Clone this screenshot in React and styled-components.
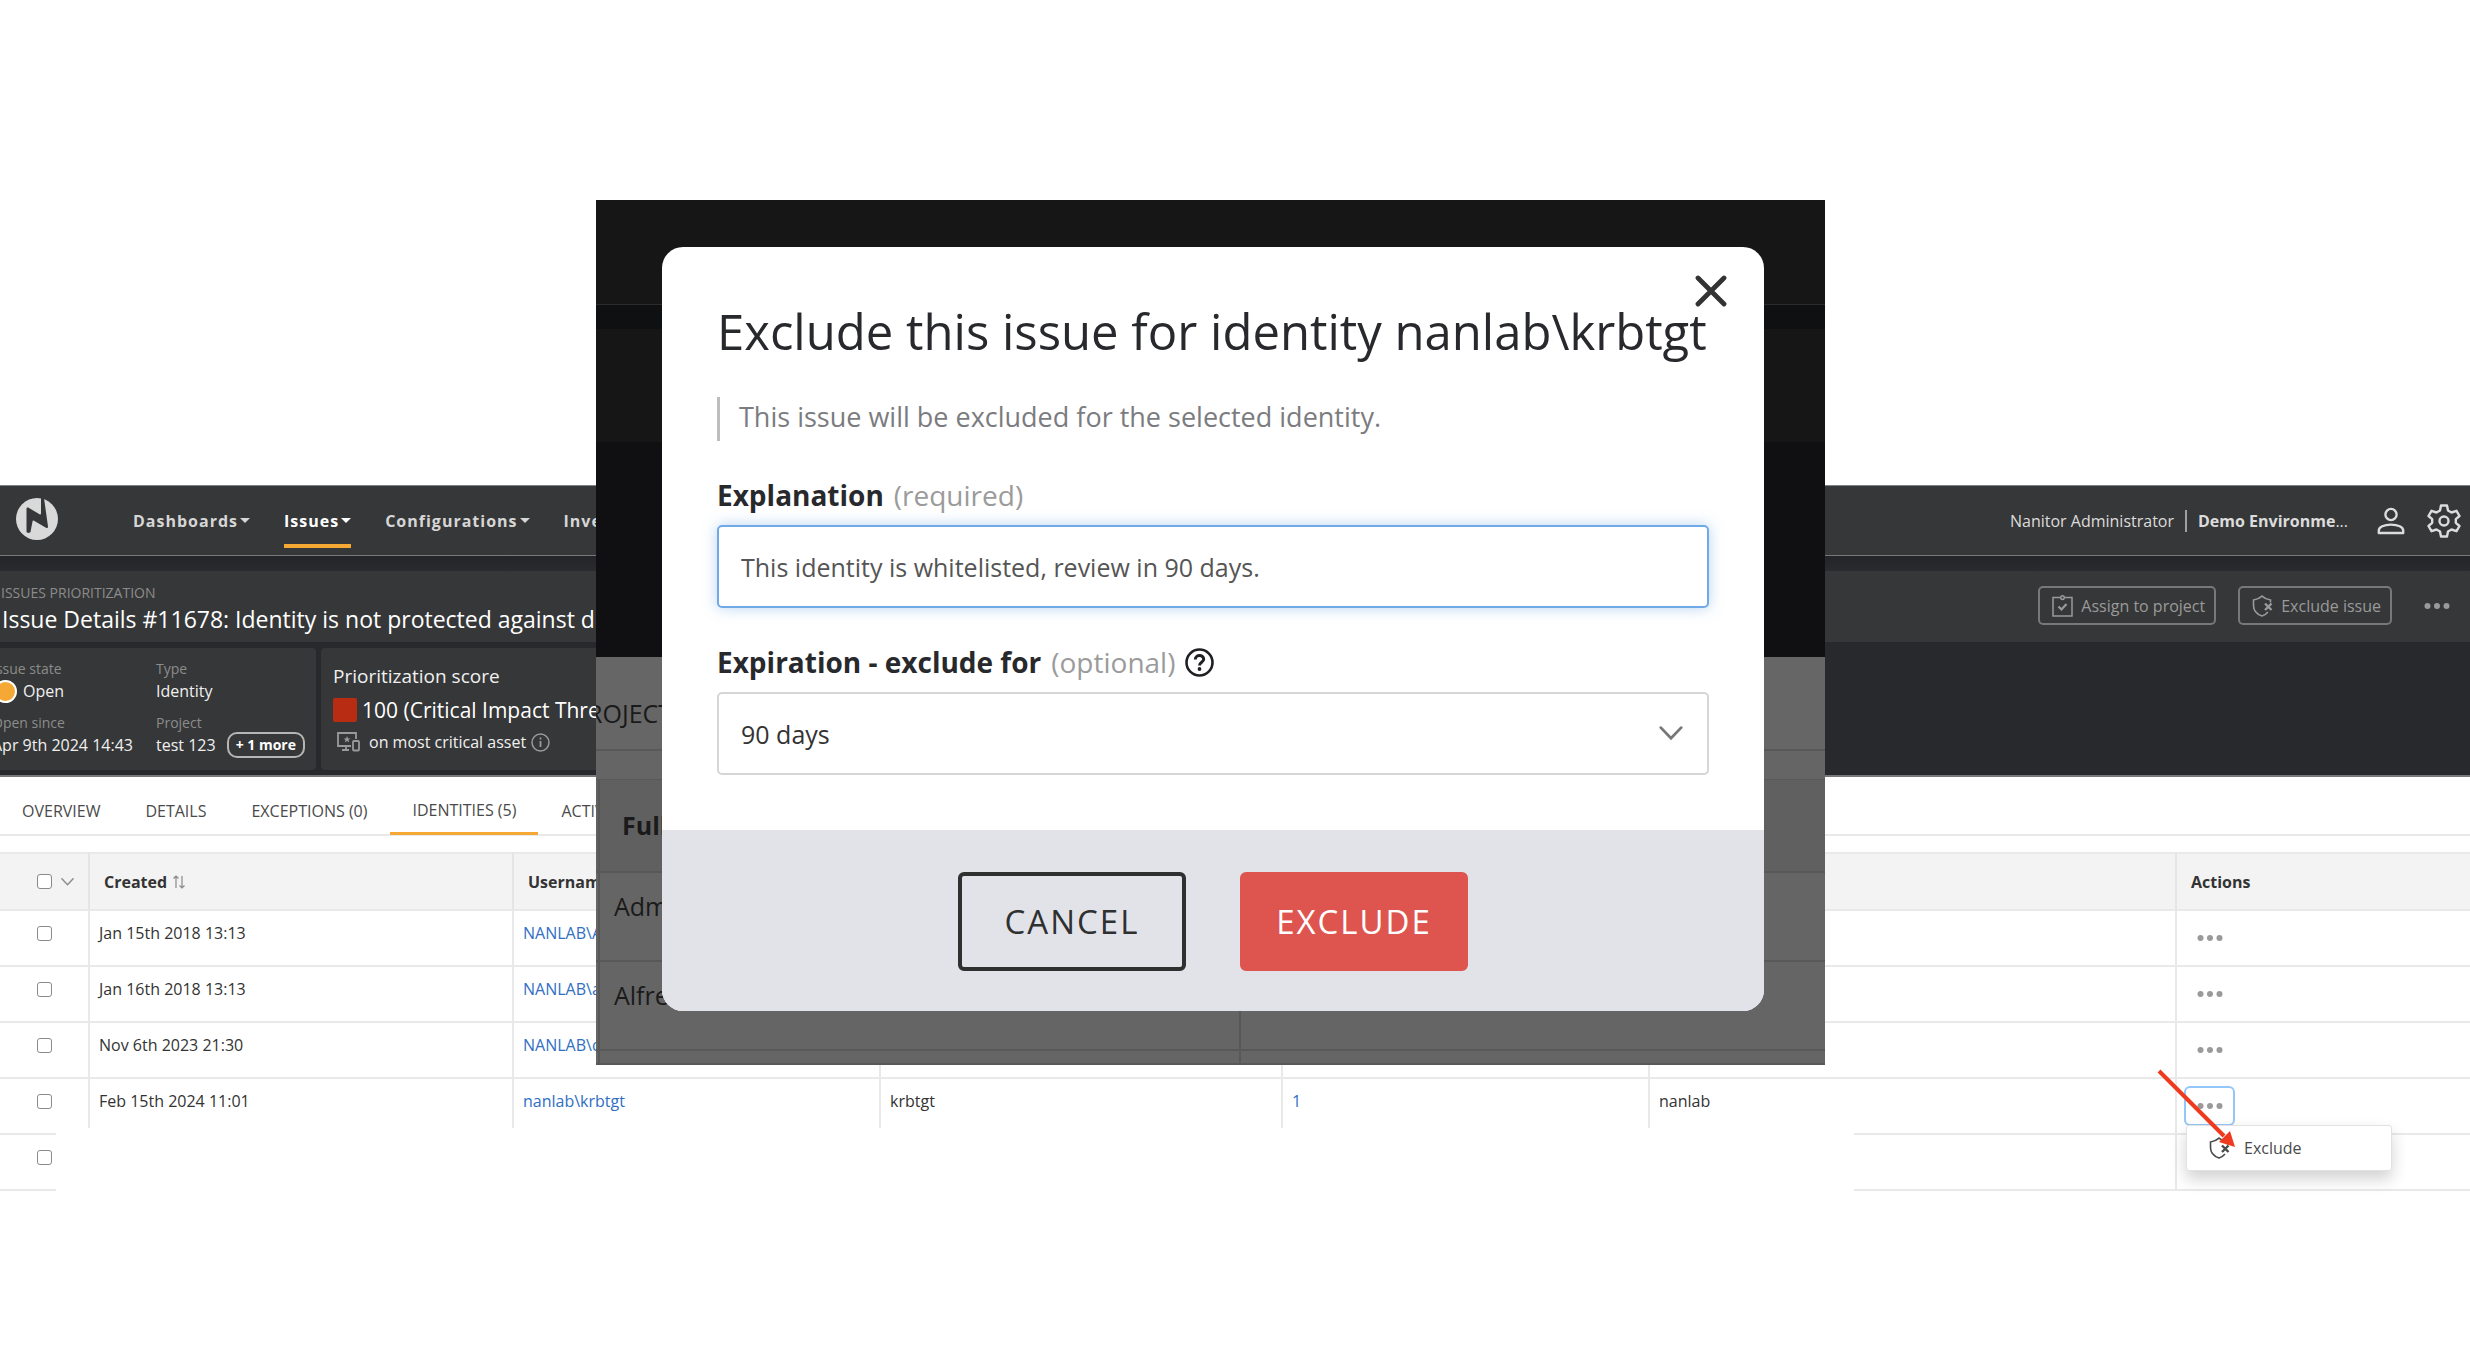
import { useState } from 'react';
import styled, { createGlobalStyle } from 'styled-components';

const colors = {
  bar: '#363738',
  dark: '#28292d',
  line: '#e9e9e9',
  text: '#333333',
  link: '#2f6fc4',
  orange: '#f5a833',
  muted: '#8c8c8c',
};

const GlobalStyle = createGlobalStyle`
  * {
    box-sizing: border-box;
  }

  body {
    margin: 0;
    background: #ffffff;
    font-family: 'Open Sans', 'Noto Sans', sans-serif;
    font-size: 16px;
    line-height: 24px;
    color: ${colors.text};
  }

  button, input, select {
    font-family: inherit;
  }
`;

const Page = styled.div`
  position: relative;
  padding: 485px 0 160px;
  overflow: hidden;
`;

/* top navigation */

const TopBar = styled.header`
  display: flex;
  align-items: center;
  height: 71px;
  padding: 0 9px 0 16px;
  background: ${colors.bar};
  border-top: 1px solid #7d838a;
  border-bottom: 1px solid #77787a;
`;

const LogoLink = styled.a`
  display: flex;
  margin-right: 75px;
  padding-bottom: 4px;
`;

const Nav = styled.nav`
  display: flex;
  gap: 34px;
  flex: 1;
`;

const NavLink = styled.a`
  display: flex;
  align-items: center;
  gap: 2px;
  height: 54px;
  padding-top: 4px;
  font-weight: 700;
  letter-spacing: 1px;
  text-decoration: none;
  color: ${({ $active }) => ($active ? '#ffffff' : '#d6d6d6')};
  border-bottom: 4px solid ${({ $active }) => ($active ? colors.orange : 'transparent')};
`;

const Caret = styled.span`
  border: 5px solid transparent;
  border-top: 5px solid currentColor;
  border-bottom: 0;
`;

const Account = styled.div`
  display: flex;
  align-items: center;
  color: #dcdcdc;
`;

const UserName = styled.span`
  padding-right: 11px;
  border-right: 2px solid #a0a0a0;
  line-height: 22px;
`;

const OrgName = styled.strong`
  margin: 0 29px 0 11px;
  white-space: nowrap;

  span {
    font-weight: 400;
  }
`;

const IconButton = styled.button`
  display: flex;
  padding: 0;
  margin-left: ${({ $gap }) => $gap || 0}px;
  border: 0;
  background: none;
  color: inherit;
`;

/* issue header */

const Shade = styled.div`
  height: 15px;
  background: linear-gradient(#232428, #2a2b2f);
`;

const TitleBar = styled.div`
  display: flex;
  justify-content: space-between;
  height: 71px;
  padding: 12px 20px 0 1px;
  background: ${colors.bar};
`;

const Breadcrumb = styled.div`
  font-size: 14px;
  line-height: 20px;
  color: ${colors.muted};
`;

const PageTitle = styled.h1`
  margin: 0;
  padding: 2px 0 0 1px;
  font-size: 23px;
  line-height: 28px;
  font-weight: 500;
  color: #ffffff;
`;

const TitleActions = styled.div`
  display: flex;
  align-items: center;
  gap: 22px;
  height: 45px;
  color: #9a9a9a;
`;

const OutlineButton = styled.button`
  display: flex;
  align-items: center;
  gap: 8px;
  height: 39px;
  padding: 0 9px 0 12px;
  font-size: 16px;
  color: #9a9a9a;
  background: none;
  border: 2px solid #77787a;
  border-radius: 5px;
`;

const Summary = styled.section`
  display: flex;
  gap: 5px;
  padding: 6px 0 5px;
  background: ${colors.dark};
  border-bottom: 2px solid #77787a;
`;

const StateCard = styled.div`
  display: grid;
  grid-template-columns: 164px 1fr;
  gap: 10px 0;
  align-content: start;
  width: 324px;
  height: 122px;
  margin-left: -8px;
  padding-top: 11px;
  background: ${colors.bar};
  border-radius: 4px;
  color: #f0f0f0;
`;

const FieldLabel = styled.div`
  font-size: 14px;
  line-height: 20px;
  color: ${colors.muted};
`;

const FieldValue = styled.div`
  display: flex;
  align-items: center;
  height: 24px;
  white-space: nowrap;
`;

const StateDot = styled.span`
  width: 23px;
  height: 23px;
  margin: 0 6px 0 2px;
  border: 2px solid #ffffff;
  border-radius: 50%;
  background: ${colors.orange};
`;

const MorePill = styled.button`
  height: 26px;
  margin-left: 11px;
  padding: 0 7px;
  font-size: 14px;
  font-weight: 700;
  line-height: 20px;
  color: #ffffff;
  background: none;
  border: 2px solid #b5b5b5;
  border-radius: 10px;
`;

const ScoreCard = styled.div`
  display: flex;
  flex-direction: column;
  gap: 6px;
  width: 900px;
  height: 122px;
  padding: 14px 12px 0;
  background: ${colors.bar};
  border-radius: 4px;
  color: #f0f0f0;
`;

const ScoreTitle = styled.div`
  font-size: 19px;
  line-height: 28px;
`;

const ScoreValue = styled.div`
  display: flex;
  align-items: center;
  gap: 5px;
  font-size: 21px;
  line-height: 28px;
  font-weight: 500;
  color: #ffffff;
`;

const ScoreSwatch = styled.span`
  width: 24px;
  height: 24px;
  border-radius: 2px;
  background: #b92c14;
`;

const ScoreNote = styled.div`
  display: flex;
  align-items: center;
  padding-left: 4px;

  span {
    margin: 0 5px 0 9px;
  }
`;

/* tabs and table */

const Tabs = styled.nav`
  display: flex;
  gap: 1px;
  height: 59px;
  padding-top: 12px;
  border-bottom: 2px solid ${colors.line};
`;

const Tab = styled.a`
  height: 46px;
  padding: 0 22px;
  line-height: ${({ $active }) => ($active ? 43 : 45)}px;
  color: #4a4a4a;
  text-decoration: none;
  border-bottom: 3px solid ${({ $active }) => ($active ? colors.orange : 'transparent')};
`;

const TableArea = styled.div`
  position: relative;
  margin-top: 16px;
`;

const Table = styled.table`
  width: 100%;
  table-layout: fixed;
  border-collapse: separate;
  border-spacing: 0;
`;

const Col = styled.col`
  width: ${({ $width }) => ($width ? `${$width}px` : 'auto')};
`;

const Th = styled.th`
  height: 59px;
  padding: 0 14px;
  text-align: left;
  font-weight: 700;
  background: #f3f3f3;
  border-top: 2px solid ${colors.line};
  border-bottom: 2px solid ${colors.line};
  border-right: 2px solid #e5e5e5;

  &:last-child {
    border-right: 0;
  }
`;

const Td = styled.td`
  height: 56px;
  padding: ${({ $action }) => ($action ? '7px 7px 0' : '10px 9px 0')};
  vertical-align: top;
  border-bottom: 2px solid ${colors.line};
  border-right: 2px solid ${colors.line};

  &:last-child {
    border-right: 0;
  }
`;

const HeadLabel = styled.span`
  display: flex;
  align-items: center;
  gap: 6px;
`;

const CheckCell = styled.div`
  display: flex;
  align-items: center;
  gap: 9px;
  height: 24px;
  padding-left: ${({ $head }) => ($head ? 23 : 28)}px;
`;

const Checkbox = styled.input`
  appearance: none;
  flex: none;
  width: 15px;
  height: 15px;
  margin: 0;
  border: 1px solid #8a8a8a;
  border-radius: 3px;
  background: #ffffff;
`;

const CellLink = styled.a`
  color: ${colors.link};
  text-decoration: none;
`;

const RowMenuButton = styled.button`
  display: flex;
  align-items: center;
  justify-content: center;
  width: 51px;
  height: 40px;
  padding: 0;
  color: #9a9a9a;
  background: none;
  border: 2px solid ${({ $open }) => ($open ? '#93c6fa' : 'transparent')};
  border-radius: 6px;
`;

const LowerBlank = styled.div`
  position: absolute;
  left: 56px;
  right: 616px;
  bottom: 0;
  height: 63px;
  background: #ffffff;
`;

const RowMenu = styled.div`
  position: absolute;
  right: 78px;
  bottom: 20px;
  width: 206px;
  background: #ffffff;
  border: 1px solid #e2e2e2;
  border-radius: 3px;
  box-shadow: 0 8px 16px rgba(0, 0, 0, 0.18);
`;

const RowMenuItem = styled.button`
  display: flex;
  align-items: center;
  gap: 14px;
  width: 100%;
  height: 44px;
  padding: 0 22px;
  font-size: 16px;
  color: #4a4a4a;
  background: none;
  border: 0;
`;

const ArrowMark = styled.svg`
  position: absolute;
  right: 234px;
  bottom: 42px;
`;

/* dialog with its dimmed backdrop */

const Scene = styled.div`
  position: absolute;
  top: 200px;
  left: 596px;
  right: 645px;
  overflow: hidden;
  font-size: 25px;
  line-height: 34px;
  color: #1a1a1a;
`;

const DimBand = styled.div`
  height: ${({ $height }) => $height}px;
  background: ${({ $tone }) => $tone};
  border-bottom: 1px solid ${({ $edge, $tone }) => $edge || $tone};
`;

const DimTabs = styled.div`
  height: 94px;
  padding-top: 39px;
  background: #666666;
  border-bottom: 2px solid #585858;

  span {
    margin-left: -24px;
  }
`;

const DimRow = styled.div`
  display: grid;
  grid-template-columns: 641px 1fr;
  height: ${({ $height }) => $height}px;
  padding-left: 2px;
  background: ${({ $head }) => ($head ? '#606060' : '#656565')};
  border-bottom: 2px solid #585858;
  font-weight: ${({ $head }) => ($head ? 700 : 400)};

  div {
    padding: ${({ $head }) => ($head ? '28px 22px 0' : '16px 14px 0')};
    border-left: 2px solid #585858;
  }
`;

const Dialog = styled.div`
  position: absolute;
  top: 47px;
  left: 66px;
  right: 61px;
  overflow: hidden;
  background: #ffffff;
  border-radius: 21px;
`;

const DialogBody = styled.div`
  padding: 54px 55px 55px;
`;

const DialogTitle = styled.h2`
  margin: 0;
  font-size: 49px;
  line-height: 60px;
  font-weight: 400;
  white-space: nowrap;
  color: #28292d;
`;

const Note = styled.p`
  margin: 36px 0 0;
  padding: 0 0 4px 19px;
  font-size: 27px;
  line-height: 40px;
  color: #7b7c80;
  border-left: 3px solid #bdbdbd;
`;

const Label = styled.label`
  display: flex;
  align-items: center;
  gap: 10px;
  height: 40px;
  margin: 34px 0 10px;
  font-size: 28px;
  font-weight: 700;
  color: #28292d;

  span {
    font-weight: 400;
    color: #9b9b9b;
  }
`;

const TextInput = styled.input`
  display: block;
  width: 100%;
  height: 83px;
  padding: 0 22px;
  font-size: 25px;
  color: #555555;
  background: #ffffff;
  border: 2px solid #6fa9e6;
  border-radius: 5px;
  outline: none;
  box-shadow: 0 0 14px rgba(111, 169, 230, 0.5);
`;

const SelectWrap = styled.div`
  position: relative;

  svg {
    position: absolute;
    right: 26px;
    top: 34px;
    pointer-events: none;
  }
`;

const Select = styled.select`
  display: block;
  appearance: none;
  width: 100%;
  height: 83px;
  padding: 0 22px;
  font-size: 25px;
  color: ${colors.text};
  background: #ffffff;
  border: 2px solid #d6d6d6;
  border-radius: 5px;
`;

const DialogFooter = styled.div`
  display: flex;
  justify-content: center;
  gap: 54px;
  padding: 42px 0 40px;
  background: #e2e3e9;
`;

const DialogButton = styled.button`
  width: 228px;
  height: 99px;
  padding: 0;
  font-size: 33px;
  font-weight: 500;
  letter-spacing: 2px;
  color: ${({ $danger }) => ($danger ? '#ffffff' : '#2f3030')};
  background: ${({ $danger }) => ($danger ? '#de554f' : 'transparent')};
  border: 4px solid ${({ $danger }) => ($danger ? '#de554f' : '#2f3030')};
  border-radius: 6px;
`;

const CloseButton = styled.button`
  position: absolute;
  top: 28px;
  right: 37px;
  display: flex;
  padding: 0;
  border: 0;
  background: none;
`;

function Dots() {
  return (
    <svg width="26" height="8" viewBox="0 0 26 8" fill="currentColor">
      <circle cx="3.500" cy="4" r="3" />
      <circle cx="13" cy="4" r="3" />
      <circle cx="22.500" cy="4" r="3" />
    </svg>
  );
}

function Shield() {
  return (
    <svg width="21" height="22" viewBox="0 0 21 22" fill="none" stroke="currentColor" strokeWidth="1.6">
      <path d="M18.5 7.500V5C15.500 4.700 12.500 3.500 10 1.200C7.500 3.500 4.500 4.700 1.500 5V10.500C1.500 15.500 5 19.300 10 21C12.500 20.200 14.500 18.800 16 17" />
      <path d="M13 8.500L19.500 15M19.500 8.500L13 15" strokeWidth="2.4" />
    </svg>
  );
}

function Clipboard() {
  return (
    <svg width="21" height="22" viewBox="0 0 21 22" fill="none" stroke="currentColor" strokeWidth="1.5">
      <path d="M8 2.500H1V21H20V2.500H13" />
      <circle cx="10.500" cy="2.600" r="1.800" />
      <path d="M6.500 11.500L9.500 14.500L14.500 9" strokeWidth="2.200" />
    </svg>
  );
}

function Chevron({ width, height, stroke, weight }) {
  return (
    <svg width={width} height={height} viewBox="0 0 22 14" fill="none" stroke={stroke} strokeWidth={weight}>
      <path d="M1.500 1.500L11 11.500L20.500 1.500" strokeLinecap="round" />
    </svg>
  );
}

const rows = [
  { created: 'Jan 15th 2018 13:13', username: 'NANLAB\\Admin' },
  { created: 'Jan 16th 2018 13:13', username: 'NANLAB\\alfred' },
  { created: 'Nov 6th 2023 21:30', username: 'NANLAB\\dave' },
  { created: 'Feb 15th 2024 11:01', username: 'nanlab\\krbtgt', name: 'krbtgt', issues: '1', domain: 'nanlab', open: true },
  { created: '', username: '', last: true },
];

function App() {
  const [explanation, setExplanation] = useState('This identity is whitelisted, review in 90 days.');

  return (
    <Page>
      <GlobalStyle />

      <TopBar>
        <LogoLink href="#" aria-label="Home">
          <svg width="42" height="42" viewBox="0 0 42 42">
            <circle cx="21" cy="21" r="21" fill="#d9d9d9" />
            <path
              d="M10.500 33.500V11C10.500 9.500 11.800 9.200 13 10L23.500 16.200C24.500 16.700 25 16.400 25 15.400V0H28L32 28.500C32 30 31 30.400 30 29.700L18 22.800C17 22.200 16.600 22.500 16.500 23.500L14.600 33.500C14.300 35.400 10.700 35.500 10.500 33.500Z"
              fill={colors.bar}
            />
          </svg>
        </LogoLink>
        <Nav>
          <NavLink href="#">Dashboards<Caret /></NavLink>
          <NavLink href="#" $active>Issues<Caret /></NavLink>
          <NavLink href="#">Configurations<Caret /></NavLink>
          <NavLink href="#">Inventory<Caret /></NavLink>
        </Nav>
        <Account>
          <UserName>Nanitor Administrator</UserName>
          <OrgName>Demo Environme<span>...</span></OrgName>
          <IconButton aria-label="Profile">
            <svg width="28" height="28" viewBox="0 0 28 28" fill="none" stroke="currentColor" strokeWidth="2.4">
              <circle cx="14" cy="7.500" r="5.600" />
              <path d="M1.800 26V23.500C1.800 20 7 17.600 14 17.600S26.200 20 26.200 23.500V26Z" strokeLinejoin="round" />
            </svg>
          </IconButton>
          <IconButton aria-label="Settings" $gap={22}>
            <svg width="34" height="34" viewBox="0 0 34 34" fill="none" stroke="currentColor" strokeWidth="2.400" strokeLinejoin="round">
              <path d="M14 1.500H20L21 6.500L24.500 8.500L29.500 6.800L32.500 12L28.800 15.200V18.800L32.500 22L29.500 27.200L24.500 25.500L21 27.500L20 32.500H14L13 27.500L9.500 25.500L4.500 27.200L1.500 22L5.200 18.800V15.200L1.500 12L4.500 6.800L9.500 8.500L13 6.500Z" />
              <circle cx="17" cy="17" r="4.500" />
            </svg>
          </IconButton>
        </Account>
      </TopBar>
      <Shade />

      <TitleBar>
        <div>
          <Breadcrumb>ISSUES PRIORITIZATION</Breadcrumb>
          <PageTitle>Issue Details #11678: Identity is not protected against delegation</PageTitle>
        </div>
        <TitleActions>
          <OutlineButton><Clipboard />Assign to project</OutlineButton>
          <OutlineButton><Shield />Exclude issue</OutlineButton>
          <IconButton aria-label="More actions" $gap={10}><Dots /></IconButton>
        </TitleActions>
      </TitleBar>

      <Summary>
        <StateCard>
          <div>
            <FieldLabel>Issue state</FieldLabel>
            <FieldValue><StateDot />Open</FieldValue>
          </div>
          <div>
            <FieldLabel>Type</FieldLabel>
            <FieldValue>Identity</FieldValue>
          </div>
          <div>
            <FieldLabel>Open since</FieldLabel>
            <FieldValue>Apr 9th 2024 14:43</FieldValue>
          </div>
          <div>
            <FieldLabel>Project</FieldLabel>
            <FieldValue>test 123<MorePill>+ 1 more</MorePill></FieldValue>
          </div>
        </StateCard>
        <ScoreCard>
          <ScoreTitle>Prioritization score</ScoreTitle>
          <ScoreValue><ScoreSwatch />100 (Critical Impact Threat)</ScoreValue>
          <ScoreNote>
            <svg width="23" height="20" viewBox="0 0 23 20" fill="none" stroke="#9a9a9a" strokeWidth="1.800">
              <path d="M14 14H1V1H19V7M5 18H12M9 14V18" />
              <rect x="16" y="9" width="6" height="9.500" rx="1" />
              <path d="M10 4L11 6.500H13.500L11.500 8L12.200 10.500L10 9L7.800 10.500L8.500 8L6.500 6.500H9Z" fill="#9a9a9a" stroke="none" />
            </svg>
            <span>on most critical asset</span>
            <svg width="19" height="19" viewBox="0 0 19 19" fill="none" stroke="#9a9a9a" strokeWidth="1.500">
              <circle cx="9.500" cy="9.500" r="8.500" />
              <path d="M9.500 8V14M9.500 4.500V6.500" strokeWidth="1.800" />
            </svg>
          </ScoreNote>
        </ScoreCard>
      </Summary>

      <Tabs>
        <Tab href="#">OVERVIEW</Tab>
        <Tab href="#">DETAILS</Tab>
        <Tab href="#">EXCEPTIONS (0)</Tab>
        <Tab href="#" $active>IDENTITIES (5)</Tab>
        <Tab href="#">ACTIVITY</Tab>
      </Tabs>

      <TableArea>
        <Table>
          <colgroup>
            <Col $width={90} />
            <Col $width={424} />
            <Col $width={367} />
            <Col $width={402} />
            <Col $width={367} />
            <Col />
            <Col $width={293} />
          </colgroup>
          <thead>
            <tr>
              <Th>
                <CheckCell $head>
                  <Checkbox type="checkbox" aria-label="Select all" />
                  <Chevron width={15} height={10} stroke="#8a8a8a" weight={2.4} />
                </CheckCell>
              </Th>
              <Th>
                <HeadLabel>
                  Created
                  <svg width="12" height="14" viewBox="0 0 12 14" fill="none" stroke="#8a8a8a" strokeWidth="1.200">
                    <path d="M3 13V1M0.500 3.500L3 1L5.500 3.500M9 1V13M6.500 10.500L9 13L11.500 10.500" />
                  </svg>
                </HeadLabel>
              </Th>
              <Th>Username</Th>
              <Th />
              <Th />
              <Th />
              <Th>Actions</Th>
            </tr>
          </thead>
          <tbody>
            {rows.map((row, index) => (
              <tr key={index}>
                <Td>
                  <CheckCell>
                    <Checkbox type="checkbox" aria-label={`Select row ${index + 1}`} />
                  </CheckCell>
                </Td>
                <Td>{row.created}</Td>
                <Td>{row.username && <CellLink href="#">{row.username}</CellLink>}</Td>
                <Td>{row.name}</Td>
                <Td>{row.issues && <CellLink href="#">{row.issues}</CellLink>}</Td>
                <Td>{row.domain}</Td>
                <Td $action>
                  {!row.last && (
                    <RowMenuButton aria-label="Row actions" $open={row.open}><Dots /></RowMenuButton>
                  )}
                </Td>
              </tr>
            ))}
          </tbody>
        </Table>
        <LowerBlank />
        <RowMenu>
          <RowMenuItem><Shield />Exclude</RowMenuItem>
        </RowMenu>
        <ArrowMark width="80" height="80" viewBox="0 0 80 80" aria-hidden="true">
          <path d="M3 2L68 67" stroke="#ee3b1f" strokeWidth="4" />
          <path d="M79 78L63 73L74 62Z" fill="#ee3b1f" />
        </ArrowMark>
      </TableArea>

      <Scene>
        <DimBand $height={105} $tone="#161616" $edge="#2c2c2c" />
        <DimBand $height={24} $tone="#0f1011" />
        <DimBand $height={113} $tone="#161616" />
        <DimBand $height={215} $tone="#101012" />
        <DimTabs><span>PROJECTS</span></DimTabs>
        <DimBand $height={29} $tone="#656565" $edge="#585858" />
        <DimRow $head $height={93}><div>Full name</div></DimRow>
        <DimRow $height={89}><div>Administrator</div><div /></DimRow>
        <DimRow $height={89}><div>Alfred</div><div /></DimRow>
        <DimRow $height={14}><div /><div /></DimRow>

        <Dialog role="dialog" aria-labelledby="dialog-title">
          <DialogBody>
            <DialogTitle id="dialog-title">Exclude this issue for identity nanlab\krbtgt</DialogTitle>
            <Note>This issue will be excluded for the selected identity.</Note>
            <Label htmlFor="explanation">Explanation <span>(required)</span></Label>
            <TextInput
              id="explanation"
              type="text"
              value={explanation}
              onChange={(e) => setExplanation(e.target.value)}
            />
            <Label htmlFor="expiration">
              Expiration - exclude for <span>(optional)</span>
              <svg width="29" height="29" viewBox="0 0 29 29" fill="none" stroke="#1f2024">
                <circle cx="14.500" cy="14.500" r="13" strokeWidth="2.600" />
                <path d="M10.300 11.500C10.300 6.300 18.700 6.300 18.700 11.300C18.700 14.300 14.500 14.300 14.500 17.500" strokeWidth="3" />
                <circle cx="14.500" cy="21" r="1.900" fill="#1f2024" stroke="none" />
              </svg>
            </Label>
            <SelectWrap>
              <Select id="expiration" defaultValue="90">
                <option value="90">90 days</option>
              </Select>
              <Chevron width={24} height={15} stroke="#777777" weight={2.6} />
            </SelectWrap>
          </DialogBody>
          <DialogFooter>
            <DialogButton>CANCEL</DialogButton>
            <DialogButton $danger>EXCLUDE</DialogButton>
          </DialogFooter>
          <CloseButton aria-label="Close">
            <svg width="32" height="32" viewBox="0 0 32 32" stroke="#333333" strokeWidth="4.800" strokeLinecap="round">
              <path d="M3 3L29 29M29 3L3 29" />
            </svg>
          </CloseButton>
        </Dialog>
      </Scene>
    </Page>
  );
}

export default App;
